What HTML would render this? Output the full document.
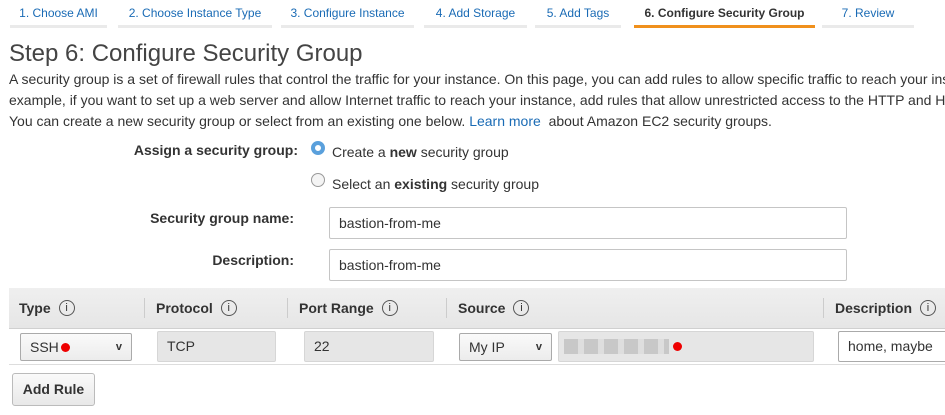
<!DOCTYPE html>
<html><head><style>
body{margin:0;width:945px;height:415px;overflow:hidden;background:#fff;font-family:"Liberation Sans",sans-serif;color:#333}
#w{position:relative;width:945px;height:415px;overflow:hidden}
.a{position:absolute;white-space:nowrap}
.tab{position:absolute;top:0;height:28px;border-bottom:3px solid #eaeaea;box-sizing:border-box;font-size:12px;color:#1a6bb5;text-align:center;line-height:26px}
.lbl{position:absolute;font-size:14px;font-weight:bold;text-align:right;width:286px;left:8px;color:#333}
.inp{position:absolute;border:1px solid #c5c5c5;border-radius:2px;box-sizing:border-box;font-size:14px;padding-left:9px;line-height:30px;background:#fff;color:#333}
.radio{position:absolute;width:14px;height:14px;border-radius:50%;border:1px solid #999;box-sizing:border-box;background:#f4f4f4}
.th{position:absolute;top:288px;height:40px;font-size:14px;font-weight:bold;display:flex;align-items:center;color:#333}
.i{display:inline-block;width:14px;height:14px;border:1px solid #555;border-radius:50%;font-size:11px;line-height:14px;text-align:center;font-weight:normal;margin-left:8px}
.sep{position:absolute;top:298px;width:1px;height:20px;background:#ccc}
.cell{position:absolute;top:331px;height:31px;border:1px solid #ccc;border-radius:2px;box-sizing:border-box;font-size:14px;line-height:29px;padding-left:9px;overflow:hidden;white-space:nowrap}
.dis{background:#e6e6e6;border-color:#d6d6d6}
.sel{background:linear-gradient(#fafafa,#ececec);border-color:#aaa}
.dot{display:inline-block;width:9px;height:9px;border-radius:50%;background:#e00;vertical-align:0}
.chev{position:absolute;right:9px;top:0;font-size:11px;font-weight:bold}
</style></head><body><div id="w">
<div class="tab" style="left:10px;width:97px">1. Choose AMI</div>
<div class="tab" style="left:118px;width:154px">2. Choose Instance Type</div>
<div class="tab" style="left:281px;width:133px">3. Configure Instance</div>
<div class="tab" style="left:424px;width:103px">4. Add Storage</div>
<div class="tab" style="left:535px;width:86px">5. Add Tags</div>
<div class="tab" style="left:634px;width:181px;border-bottom-color:#f0901c;color:#333;font-weight:bold">6. Configure Security Group</div>
<div class="tab" style="left:822px;width:92px">7. Review</div>

<div class="a" style="left:9px;top:40px;font-size:24px;color:#444">Step 6: Configure Security Group</div>
<div class="a" style="left:9px;top:69px;font-size:14px;line-height:21px">A security group is a set of firewall rules that control the traffic for your instance. On this page, you can add rules to allow specific traffic to reach your instance. For<br>example, if you want to set up a web server and allow Internet traffic to reach your instance, add rules that allow unrestricted access to the HTTP and HTTPS ports.<br>You can create a new security group or select from an existing one below. <span style="color:#1a6bb5">Learn more</span>&nbsp; about Amazon EC2 security groups.</div>

<div class="lbl" style="top:142px;width:290px">Assign a security group:</div>
<div class="radio" style="left:311px;top:141px;border:4px solid #5aa0dc;background:#fff"></div>
<div class="a" style="left:332px;top:144px;font-size:14px">Create a <b>new</b> security group</div>
<div class="radio" style="left:311px;top:173px"></div>
<div class="a" style="left:332px;top:176px;font-size:14px">Select an <b>existing</b> security group</div>

<div class="lbl" style="top:210px">Security group name:</div>
<div class="inp" style="left:329px;top:207px;width:518px;height:32px">bastion-from-me</div>
<div class="lbl" style="top:252px">Description:</div>
<div class="inp" style="left:329px;top:249px;width:518px;height:32px">bastion-from-me</div>

<div class="a" style="left:9px;top:288px;width:936px;height:40px;background:linear-gradient(#efefef,#e6e6e6);border-bottom:1px solid #d0d0d0"></div>
<div class="th" style="left:19px">Type<span class="i">i</span></div>
<div class="sep" style="left:144px"></div>
<div class="th" style="left:156px">Protocol<span class="i">i</span></div>
<div class="sep" style="left:287px"></div>
<div class="th" style="left:299px">Port Range<span class="i">i</span></div>
<div class="sep" style="left:446px"></div>
<div class="th" style="left:458px">Source<span class="i">i</span></div>
<div class="sep" style="left:823px"></div>
<div class="th" style="left:835px">Description<span class="i">i</span></div>

<div class="cell sel" style="left:20px;width:112px;top:333px;height:28px;line-height:26px">SSH<span class="dot" style="margin-left:2px"></span><span class="chev">v</span></div>
<div class="cell dis" style="left:157px;width:119px">TCP</div>
<div class="cell dis" style="left:304px;width:130px">22</div>
<div class="cell sel" style="left:459px;width:93px;top:333px;height:28px;line-height:26px">My IP<span class="chev">v</span></div>
<div class="cell dis" style="left:558px;width:256px"><span style="display:inline-block;width:105px;height:15px;margin-left:-4px;vertical-align:-3px;background:repeating-linear-gradient(90deg,#c8c8c8 0 14px,#dedede 14px 20px)"></span> <span class="dot"></span></div>
<div class="cell" style="left:838px;width:120px;background:#fff;border-color:#aaa">home, maybe</div>
<div class="a" style="left:9px;top:364px;width:936px;height:1px;background:#ddd"></div>

<div class="a" style="left:12px;top:373px;width:83px;height:33px;box-sizing:border-box;border:1px solid #bbb;border-radius:3px;background:linear-gradient(#fafafa,#e8e8e8);font-size:14px;font-weight:bold;line-height:31px;text-align:center">Add Rule</div>
</div></body></html>
